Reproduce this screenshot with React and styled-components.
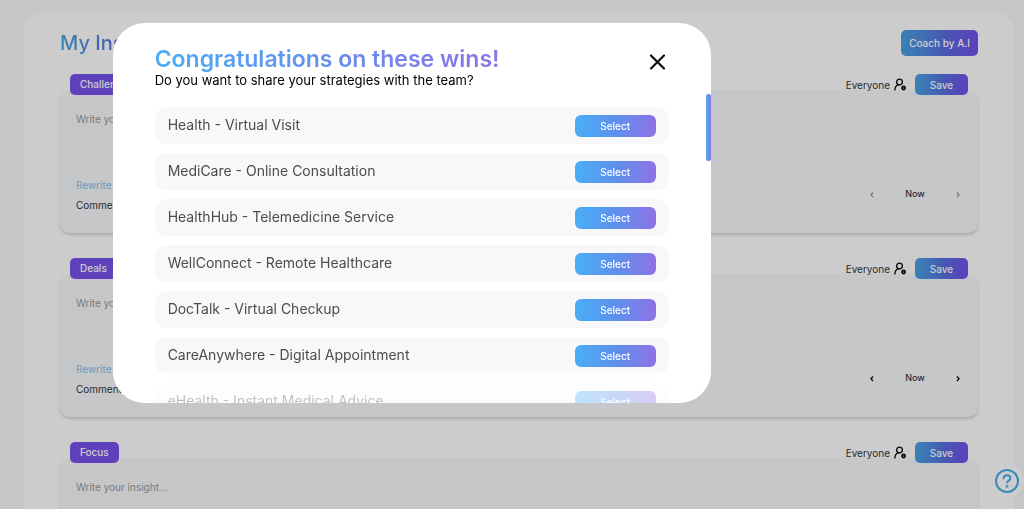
import { useState } from 'react';
import styled, { createGlobalStyle } from 'styled-components';

const GlobalStyle = createGlobalStyle`
  :root {
    --gradient: linear-gradient(90deg, #4bacf5 5%, #5e90ee 50%, #8e72e6 100%);
    --gradient-strong: linear-gradient(90deg, #48a4e0 0%, #5a6be0 60%, #7650ec 100%);
    --page-color: #f6f8fa;
    --panel-color: #f8f9fb;
    --field-color: #f8f8f8;
    --purple: #7753ea;
    --text-color: #33343d;
    --text-muted: #9a9aa2;
    --blue: #4bacea;
  }

  * {
    box-sizing: border-box;
  }

  body {
    margin: 0;
    height: 100vh;
    overflow: hidden;
    background: var(--page-color);
    color: var(--text-color);
    font-family: Inter, 'Liberation Sans', sans-serif;
    font-size: 10px;
  }

  button,
  textarea {
    font: inherit;
  }

  button {
    padding: 0;
    border: 0;
    background: none;
    color: inherit;
    cursor: pointer;
  }
`;

const Page = styled.main`
  height: calc(100vh - 12px);
  margin: 12px 10px 0 24px;
  padding: 18px 36px 0;
  overflow: hidden;
  background: #fff;
  border-radius: 20px 20px 0 0;
`;

const Header = styled.header`
  display: flex;
  justify-content: space-between;
  align-items: center;
  height: 26px;
  margin-bottom: 18px;
`;

const PageTitle = styled.h1`
  margin: 0;
  font-size: 20px;
  line-height: 24px;
  font-weight: 500;
  color: transparent;
  background: linear-gradient(90deg, #48a4e0, #5a6be0 70px, #7650ec);
  background-clip: text;
`;

const GradientButton = styled.button`
  height: ${props => (props.$tall ? '26px' : '21px')};
  min-width: 53px;
  padding: 0 8px;
  border-radius: 5px;
  background: var(--gradient-strong);
  color: #fff;
  font-weight: 500;
  line-height: 16px;
`;

const Section = styled.section`
  margin-bottom: 25px;
`;

const SectionBar = styled.div`
  position: relative;
  z-index: 1;
  display: flex;
  align-items: center;
  height: 21px;
  margin-bottom: -5px;
  padding: 0 10px;
`;

const Tab = styled.h2`
  margin: 0 auto 0 0;
  padding: 0 10px;
  border-radius: 5px;
  background: var(--purple);
  color: #fff;
  font-size: 10px;
  line-height: 21px;
  font-weight: 500;
`;

const Audience = styled.button`
  display: flex;
  align-items: center;
  gap: 4px;
  margin-right: 8px;
`;

const Panel = styled.div`
  height: 143px;
  padding: 16px 8px 0;
  border-radius: 10px;
  background: var(--panel-color);
  box-shadow: 0 2px 3px rgba(0, 0, 0, 0.16);
`;

const Field = styled.textarea`
  display: block;
  width: 100%;
  height: 62px;
  padding: 5px 8px;
  border: 0;
  border-radius: 6px;
  resize: none;
  outline: none;
  background: var(--field-color);
  line-height: 16px;

  &::placeholder {
    color: var(--text-muted);
    opacity: 1;
  }
`;

const PanelFooter = styled.div`
  display: flex;
  justify-content: space-between;
  align-items: flex-start;
  padding: 9px 8px 0;
`;

const Links = styled.div`
  display: flex;
  flex-direction: column;
  gap: 4px;
  line-height: 16px;
`;

const TextLink = styled.a`
  color: ${props => (props.$accent ? '#7fc4f2' : 'var(--text-color)')};
  text-decoration: none;
`;

const Pager = styled.div`
  display: flex;
  align-items: center;
  justify-content: space-between;
  width: 94px;
  margin-top: 9px;
  font-size: 9px;
  line-height: 16px;
  font-weight: 500;
`;

const PagerButton = styled.button`
  display: flex;

  &:disabled {
    opacity: 0.4;
  }
`;

const HelpButton = styled.button`
  position: fixed;
  right: 0;
  bottom: 11px;
  display: grid;
  place-items: center;
  width: 34px;
  height: 34px;
  border-radius: 50%;
  background: #fff;
  color: var(--blue);
`;

const Overlay = styled.div`
  position: fixed;
  inset: 0;
  z-index: 10;
  padding-top: 23px;
  background: rgba(0, 0, 0, 0.2);
`;

const Modal = styled.div`
  display: flex;
  flex-direction: column;
  width: 58.4%;
  height: calc(100vh - 129px);
  margin-left: 11%;
  overflow: hidden;
  border-radius: 32px;
  background: #fff;
`;

const ModalHeader = styled.div`
  display: flex;
  justify-content: space-between;
  align-items: flex-start;
  flex-shrink: 0;
  height: 71px;
  padding: 22px 42px 0;
`;

const ModalTitle = styled.h2`
  margin: 0;
  font-size: 23px;
  line-height: 28px;
  font-weight: 600;
  color: transparent;
  background: linear-gradient(90deg, #4bacf5, #6490ee 50%, #8e72e6);
  background-clip: text;
`;

const ModalSubtitle = styled.p`
  margin: 0;
  color: #000;
  font-size: 13px;
  line-height: 14px;
`;

const CloseButton = styled.button`
  display: grid;
  place-items: center;
  width: 24px;
  height: 34px;
  color: #111;
`;

const ModalBody = styled.div`
  position: relative;
  display: flex;
  flex: 1;
  min-height: 0;
`;

const WinList = styled.ul`
  display: flex;
  flex: 1;
  flex-direction: column;
  gap: 9px;
  margin: 0;
  padding: 13px 37px 0 42px;
  overflow: hidden;
  list-style: none;
`;

const WinRow = styled.li`
  display: flex;
  flex-shrink: 0;
  align-items: center;
  justify-content: space-between;
  height: 37px;
  padding: 0 13px;
  border-radius: 12px;
  background: #f8f8f8;
  color: #4c4c4c;
  font-size: 14px;
  line-height: 18px;
`;

const WinName = styled.span`
  padding-bottom: 2px;
`;

const SelectButton = styled.button`
  width: 81px;
  height: 22px;
  border-radius: 6px;
  background: var(--gradient);
  color: #fff;
  font-size: 10px;
  font-weight: 500;
`;

const ScrollThumb = styled.div`
  flex-shrink: 0;
  width: 5px;
  height: 67px;
  border-radius: 2px;
  background: linear-gradient(90deg, #4bacf5, #8e72e6);
`;

const Fade = styled.div`
  position: absolute;
  inset: auto 0 0;
  height: 32px;
  background: rgba(255, 255, 255, 0.65);
  pointer-events: none;
`;

const sections = [
  { title: 'Challenges', hasEntries: true, canPage: false },
  { title: 'Deals', hasEntries: true, canPage: true },
  { title: 'Focus', hasEntries: false, canPage: false }
];

const wins = [
  'Health - Virtual Visit',
  'MediCare - Online Consultation',
  'HealthHub - Telemedicine Service',
  'WellConnect - Remote Healthcare',
  'DocTalk - Virtual Checkup',
  'CareAnywhere - Digital Appointment',
  'eHealth - Instant Medical Advice'
];

const AudienceIcon = () => (
  <svg width="13" height="13" viewBox="0 0 13 13" fill="none" stroke="#111" strokeWidth="1.4" strokeLinecap="round" aria-hidden="true">
    <circle cx="5.5" cy="4" r="2.9" />
    <path d="M.9 11.900C1 9 2.600 7 5.200 6.900" />
    <circle cx="9.600" cy="10" r="1.500" strokeWidth="1.900" />
  </svg>
);

const Chevron = ({ left }) => (
  <svg width="8" height="8" viewBox="0 0 8 8" fill="none" stroke="#111" strokeWidth="1.4" aria-hidden="true">
    <path d={left ? 'M5 2.500 3 4.800l2 2.300' : 'M3 2.500l2 2.300-2 2.300'} />
  </svg>
);

const CloseIcon = () => (
  <svg width="16" height="16" viewBox="0 0 16 16" fill="none" stroke="currentColor" strokeWidth="2.2" strokeLinecap="round" aria-hidden="true">
    <path d="M2 1.500l13 13M15 1.500l-13 13" />
  </svg>
);

const HelpIcon = () => (
  <svg width="24" height="24" viewBox="0 0 24 24" fill="none" stroke="currentColor" strokeWidth="2" strokeLinecap="round" aria-hidden="true">
    <circle cx="12" cy="12" r="11" />
    <path d="M8.6 9.2c.2-1.8 1.6-2.9 3.4-2.9 1.9 0 3.4 1.2 3.4 2.9 0 2.300-3.300 2.500-3.300 4.400" />
    <circle cx="12" cy="17.3" r="0.5" />
  </svg>
);

const InsightSection = ({ title, hasEntries, canPage }) => (
  <Section>
    <SectionBar>
      <Tab>{title}</Tab>
      <Audience type="button">
        Everyone
        <AudienceIcon />
      </Audience>
      <GradientButton type="button">Save</GradientButton>
    </SectionBar>
    <Panel>
      <Field aria-label={title} placeholder="Write your insight..." />
      {hasEntries && (
        <PanelFooter>
          <Links>
            <TextLink href="#rewrite" $accent>Rewrite</TextLink>
            <TextLink href="#comments">Comments</TextLink>
          </Links>
          <Pager>
            <PagerButton type="button" aria-label="Previous" disabled={!canPage}>
              <Chevron left />
            </PagerButton>
            <span>Now</span>
            <PagerButton type="button" aria-label="Next" disabled={!canPage}>
              <Chevron />
            </PagerButton>
          </Pager>
        </PanelFooter>
      )}
    </Panel>
  </Section>
);

const WinsModal = ({ onClose }) => (
  <Overlay>
    <Modal role="dialog" aria-modal="true" aria-labelledby="wins-title">
      <ModalHeader>
        <div>
          <ModalTitle id="wins-title">Congratulations on these wins!</ModalTitle>
          <ModalSubtitle>Do you want to share your strategies with the team?</ModalSubtitle>
        </div>
        <CloseButton type="button" aria-label="Close" onClick={onClose}>
          <CloseIcon />
        </CloseButton>
      </ModalHeader>
      <ModalBody>
        <WinList>
          {wins.map(win => (
            <WinRow key={win}>
              <WinName>{win}</WinName>
              <SelectButton type="button">Select</SelectButton>
            </WinRow>
          ))}
        </WinList>
        <ScrollThumb />
        <Fade />
      </ModalBody>
    </Modal>
  </Overlay>
);

const App = () => {
  const [open, setOpen] = useState(true);

  return (
    <>
      <GlobalStyle />
      <Page>
        <Header>
          <PageTitle>My Insights</PageTitle>
          <GradientButton type="button" $tall>Coach by A.I</GradientButton>
        </Header>
        {sections.map(section => (
          <InsightSection key={section.title} {...section} />
        ))}
      </Page>
      <HelpButton type="button" aria-label="Help">
        <HelpIcon />
      </HelpButton>
      {open && <WinsModal onClose={() => setOpen(false)} />}
    </>
  );
};

export default App;
